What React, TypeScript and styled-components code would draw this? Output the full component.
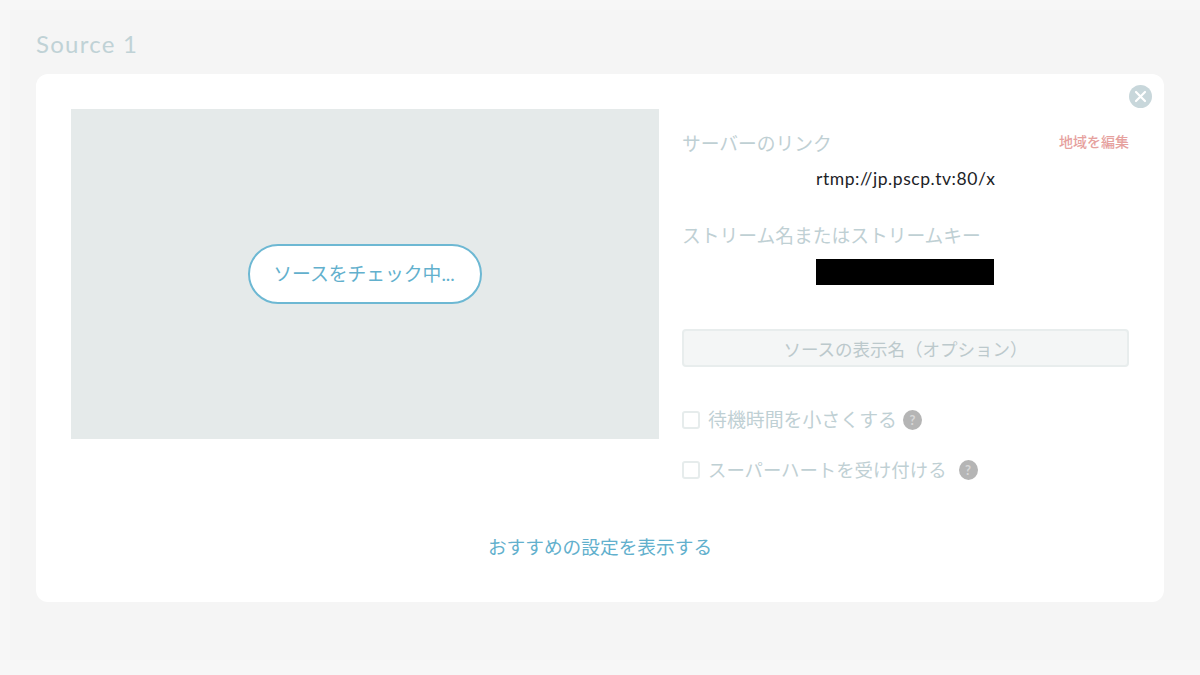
import React from "react";
import styled, { createGlobalStyle } from "styled-components";

const Global = createGlobalStyle`
  html, body { margin: 0; padding: 0; background: #f7f7f7; }
  body { font-family: Lato, "Noto Sans CJK JP", sans-serif; }
  * { box-sizing: border-box; }
`;

const Page = styled.div`
  width: 1200px;
  height: 675px;
  padding: 10px 0 15px 10px;
  overflow: hidden;
`;
const Backdrop = styled.div`
  height: 650px;
  background: #f5f5f5;
  padding: 20px 36px 0 26px;
`;
const Title = styled.h1`
  margin: 0;
  height: 44px;
  font-size: 24px;
  line-height: 27px;
  font-weight: 400;
  letter-spacing: 1.25px;
  color: #c0d2d6;
`;
const Card = styled.section`
  position: relative;
  height: 528px;
  background: #fff;
  border-radius: 12px;
  padding: 35px 35px 0;
`;
const Main = styled.div`
  display: grid;
  grid-template-columns: 588px 447px;
  column-gap: 23px;
`;
const Preview = styled.div`
  height: 330px;
  background: #e5eaea;
  display: flex;
  align-items: center;
  justify-content: center;
`;
const CheckButton = styled.div`
  width: 234px;
  height: 60px;
  padding: 0 2px 4px 0;
  border: 2px solid #6db8d3;
  border-radius: 30px;
  background: #fff;
  color: #62b0cd;
  font-size: 18.8px;
  display: flex;
  align-items: center;
  justify-content: center;
`;
const Side = styled.div`
  display: flex;
  flex-direction: column;
  padding-top: 22px;
`;
const LabelRow = styled.div`
  display: flex;
  justify-content: space-between;
  align-items: flex-start;
  height: 25px;
`;
const FieldLabel = styled.div`
  font-size: 18.75px;
  line-height: 25px;
  height: 25px;
  color: #bfd0d4;
`;
const EditLink = styled.span`
  font-size: 14px;
  line-height: 22px;
  color: #e6a19e;
  font-weight: 500;
`;
const ServerUrl = styled.div`
  height: 24px;
  margin: 11px 0 32px;
  padding-left: 134px;
  font-size: 17.5px;
  line-height: 24px;
  letter-spacing: 0.55px;
  color: #1c2226;
`;
const Redacted = styled.div`
  width: 178px;
  height: 26px;
  margin: 11px 0 0 134px;
  background: #000;
`;
const NameInput = styled.div`
  height: 38px;
  margin: 44px 0 0;
  background: #f4f6f6;
  border: 2px solid #e8eded;
  border-radius: 4px;
  color: #bcc9cc;
  font-size: 17.5px;
  display: flex;
  align-items: center;
  justify-content: center;
`;
const OptionList = styled.div`
  display: flex;
  flex-direction: column;
  gap: 24px;
  margin-top: 40px;
`;
const Option = styled.label`
  display: flex;
  align-items: center;
  height: 26px;
`;
const Box = styled.span`
  width: 18px;
  height: 18px;
  border: 2px solid #e6ecec;
  border-radius: 3px;
  background: #fff;
  margin-right: 8px;
  flex: none;
`;
const OptionText = styled.span<{ $size: number }>`
  font-size: ${(p) => p.$size}px;
  margin-top: -3px;
  color: #bfd0d4;
`;
const Help = styled.span<{ $gap: number }>`
  width: 19px;
  height: 20px;
  border-radius: 50%;
  background: #b5b5b5;
  color: #d8d8d8;
  font-size: 13px;
  font-weight: 700;
  margin-left: ${(p) => p.$gap}px;
  display: flex;
  align-items: center;
  justify-content: center;
  flex: none;
`;
const Recommend = styled.div`
  margin-top: 51px;
  text-align: center;
  font-size: 18.7px;
  line-height: 26px;
  color: #62b0cd;
`;
const Close = styled.div`
  position: absolute;
  top: 11px;
  right: 12px;
  width: 23px;
  height: 23px;
  border-radius: 50%;
  background: #c8d7db;
  display: flex;
  align-items: center;
  justify-content: center;
`;

export default function App() {
  return (
    <Page>
      <Global />
      <Backdrop>
        <Title>Source 1</Title>
        <Card>
          <Close>
            <svg width="13" height="13" viewBox="0 0 13 13" fill="none" stroke="#fff" strokeWidth="2.2" strokeLinecap="round">
              <path d="M2 2l9 9M11 2l-9 9" />
            </svg>
          </Close>
          <Main>
            <Preview>
              <CheckButton>ソースをチェック中...</CheckButton>
            </Preview>
            <Side>
              <LabelRow>
                <FieldLabel>サーバーのリンク</FieldLabel>
                <EditLink>地域を編集</EditLink>
              </LabelRow>
              <ServerUrl>rtmp://jp.pscp.tv:80/x</ServerUrl>
              <FieldLabel>ストリーム名またはストリームキー</FieldLabel>
              <Redacted />
              <NameInput>ソースの表示名（オプション）</NameInput>
              <OptionList>
                <Option>
                  <Box />
                  <OptionText $size={18.9}>待機時間を小さくする</OptionText>
                  <Help $gap={6}>?</Help>
                </Option>
                <Option>
                  <Box />
                  <OptionText $size={18.4}>スーパーハートを受け付ける</OptionText>
                  <Help $gap={12}>?</Help>
                </Option>
              </OptionList>
            </Side>
          </Main>
          <Recommend>おすすめの設定を表示する</Recommend>
        </Card>
      </Backdrop>
    </Page>
  );
}
